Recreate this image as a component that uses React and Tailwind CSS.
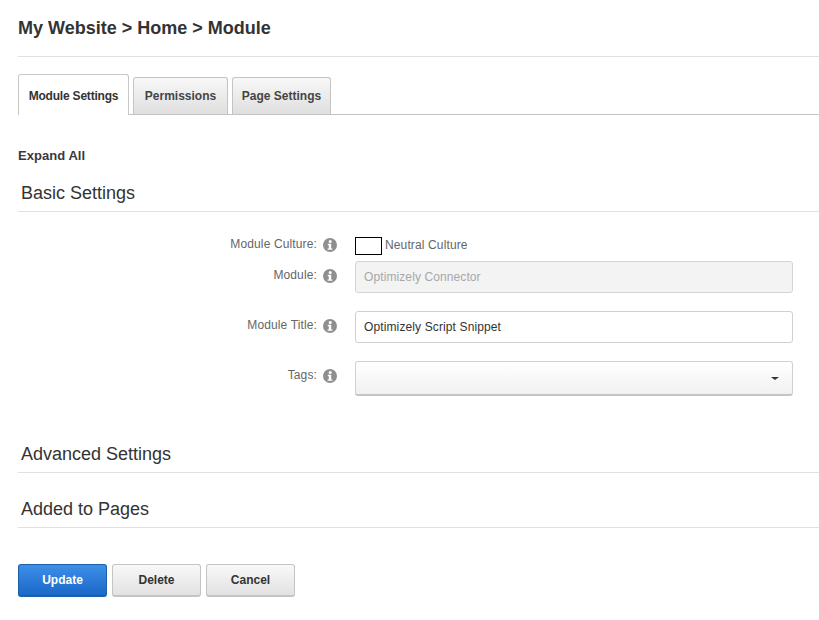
import React from 'react';

const font = "font-['Liberation_Sans',Arial,sans-serif]";

function InfoIcon() {
  return (
    <svg viewBox="0 0 14 14" className="w-[14px] h-[14px] shrink-0">
      <circle cx="7" cy="7" r="7" fill="#8f8f8f" />
      <circle cx="7.2" cy="3.4" r="1.5" fill="#fff" />
      <path d="M4.8 5.8h3.4v4.6h1.2v1.4H4.6v-1.4h1.2V7.2h-1z" fill="#fff" />
    </svg>
  );
}

function Section({ title, className }) {
  return (
    <div className={`h-[31px] border-b border-[#e0e0e0] pl-[3px] text-[18px] leading-[24px] text-[#333] ${className}`}>
      {title}
    </div>
  );
}

function Row({ label, className, labelClass, iconClass, children }) {
  return (
    <div className={`flex items-start ${className}`}>
      <div className={`w-[299px] text-right text-[12px] leading-[14px] tracking-[0.13px] text-[#666] ${labelClass}`}>{label}</div>
      <div className={`ml-[6px] mr-[18px] ${iconClass}`}>
        <InfoIcon />
      </div>
      {children}
    </div>
  );
}

function Tab({ label, active, width }) {
  if (active) {
    return (
      <div className="relative z-10 -mb-px flex h-[41px] w-[111px] items-center justify-center rounded-t-[3px] border border-b-0 border-[#c8c8c8] bg-white pt-[2px] text-[12px] font-bold tracking-[-0.2px] text-[#333]">
        {label}
      </div>
    );
  }
  return (
    <div className={`flex h-[37px] items-center justify-center rounded-t-[3px] border border-b-0 border-[#c4c4c4] bg-gradient-to-b from-[#f8f8f8] to-[#dfdfdf] text-[12px] font-bold text-[#444] ${width}`}>
      {label}
    </div>
  );
}

function Button({ label, primary }) {
  const look = primary
    ? 'border-[#1b5fa8] bg-gradient-to-b from-[#3d8fe8] to-[#1a68c8] text-white'
    : 'border-[#c4c4c4] bg-gradient-to-b from-[#f8f8f8] to-[#e2e2e2] text-[#333]';
  return (
    <button className={`h-[33px] w-[89px] rounded-[3px] border border-b-2 text-[12px] font-bold ${look}`}>
      {label}
    </button>
  );
}

export default function App() {
  return (
    <div className={`${font} h-[620px] w-[819px] overflow-hidden bg-white pl-[18px]`}>
      <div className="flex h-[57px] items-start border-b border-[#e0e0e0] pt-[18px] text-[18px] font-bold leading-[21px] text-[#333]">
        My Website &gt; Home &gt; Module
      </div>

      <div className="mt-[17px] flex items-end gap-[4px] border-b border-[#c4c4c4]">
        <Tab label="Module Settings" active />
        <Tab label="Permissions" width="w-[95px]" />
        <Tab label="Page Settings" width="w-[99px]" />
      </div>

      <div className="mt-[34px] text-[13px] font-bold leading-[14px] tracking-[0.05px] text-[#3a3a3a]">Expand All</div>

      <Section title="Basic Settings" className="mt-[18px]" />

      <Row label="Module Culture:" className="mt-[25px] h-[24px]" iconClass="mt-[1px]">
        <div className="h-[18px] w-[27px] border border-black bg-white" />
        <span className="ml-[3px] mt-[1px] text-[12px] leading-[14px] tracking-[0.13px] text-[#666]">Neutral Culture</span>
      </Row>

      <Row label="Module:" className="h-[50px]" labelClass="mt-[7px]" iconClass="mt-[8px]">
        <div className="flex h-[32px] w-[438px] items-center rounded-[3px] border border-[#d4d4d4] bg-[#f3f3f3] px-[8px] text-[12px] tracking-[0.1px] text-[#a8a8a8]">
          Optimizely Connector
        </div>
      </Row>

      <Row label="Module Title:" className="h-[50px]" labelClass="mt-[7px]" iconClass="mt-[8px]">
        <div className="flex h-[32px] w-[438px] items-center rounded-[3px] border border-[#d0d0d0] bg-white px-[8px] text-[12px] tracking-[0.12px] text-[#333]">
          Optimizely Script Snippet
        </div>
      </Row>

      <Row label="Tags:" className="h-[35px]" labelClass="mt-[7px]" iconClass="mt-[8px]">
        <div className="flex h-[35px] w-[438px] items-center justify-end rounded-[3px] border border-b-2 border-[#d0d0d0] border-b-[#c4c4c4] bg-gradient-to-b from-white to-[#f1f1f1] pr-[13px]">
          <div className="h-0 w-0 border-x-[4px] border-t-[3px] border-x-transparent border-t-[#333]" />
        </div>
      </Row>

      <Section title="Advanced Settings" className="mt-[46px]" />
      <Section title="Added to Pages" className="mt-[24px]" />

      <div className="mt-[36px] flex gap-[5px]">
        <Button label="Update" primary />
        <Button label="Delete" />
        <Button label="Cancel" />
      </div>
    </div>
  );
}
